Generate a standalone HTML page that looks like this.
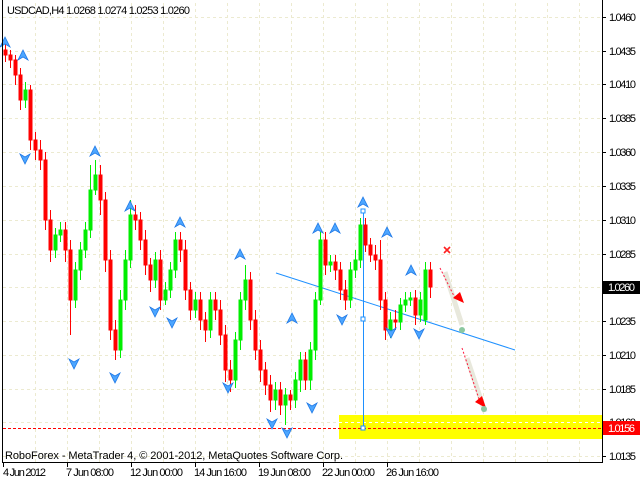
<!DOCTYPE html>
<html><head><meta charset="utf-8"><style>
html,body{margin:0;padding:0;background:#fff;width:640px;height:480px;overflow:hidden}
svg{display:block}
text{font-family:"Liberation Sans",sans-serif;font-size:11px;fill:#000}
</style></head><body>
<svg width="640" height="480" viewBox="0 0 640 480" xmlns="http://www.w3.org/2000/svg">
<rect width="640" height="480" fill="#fff"/>
<g stroke="#ecead0" stroke-width="1" stroke-dasharray="3,3">
<path d="M3 17.5H602M3 51.5H602M3 84.5H602M3 118.5H602M3 152.5H602M3 186.5H602M3 220.5H602M3 254.5H602M3 287.5H602M3 321.5H602M3 355.5H602M3 389.5H602M3 422.5H602M3 456.5H602"/>
<path d="M35.5 3V462M67.5 3V462M99.5 3V462M131.5 3V462M163.5 3V462M195.5 3V462M227.5 3V462M259.5 3V462M291.5 3V462M323.5 3V462M355.5 3V462M387.5 3V462M419.5 3V462M451.5 3V462M483.5 3V462M515.5 3V462M547.5 3V462M579.5 3V462"/>
</g>
<rect x="339" y="415" width="263" height="24" fill="#ffff00"/>
<path d="M339 422.5H602" stroke="#fff" stroke-dasharray="3,3"/>
<path d="M3 428.5H602" stroke="#ff0000" stroke-dasharray="3,2"/>
<path d="M276 273L515 350" stroke="#1e90ff" stroke-width="1"/>
<path d="M363.5 211V428" stroke="#1e90ff"/>
<g fill="#fff" stroke="#1e90ff"><rect x="361" y="209" width="4" height="4"/><rect x="361" y="317" width="4" height="4"/><rect x="361" y="426" width="4" height="4"/></g>
<g stroke="#ff0000" fill="#ff0000">
<path d="M5.5 42V62M10.5 50V68M15.5 55V85M20.5 68V110M30.5 85V150M35.5 132V160M40.5 140V170M45.5 152V230M50.5 210V262M65.5 222V262M70.5 240V335M100.5 165V215M105.5 192V272M110.5 250V340M115.5 320V360M135.5 205V230M140.5 212V250M145.5 230V275M150.5 258V292M160.5 250V310M180.5 232V262M185.5 240V300M190.5 282V320M200.5 292V330M205.5 312V342M215.5 292V320M220.5 300V345M225.5 325V382M230.5 360V392M250.5 272V330M255.5 310V360M260.5 340V382M265.5 362V395M270.5 375V412M280.5 382V415M290.5 390V410M305.5 352V390M325.5 232V275M335.5 255V280M340.5 262V300M345.5 280V310M365.5 218V252M370.5 238V262M375.5 245V270M380.5 240V310M385.5 292V340M395.5 310V330M415.5 290V325M430.5 262V298"/>
<rect x="4" y="50" width="3" height="5"/><rect x="9" y="55" width="3" height="5"/><rect x="14" y="60" width="3" height="15"/><rect x="19" y="75" width="3" height="25"/><rect x="29" y="90" width="3" height="50"/><rect x="34" y="140" width="3" height="10"/><rect x="39" y="150" width="3" height="10"/><rect x="44" y="160" width="3" height="60"/><rect x="49" y="220" width="3" height="30"/><rect x="64" y="230" width="3" height="20"/><rect x="69" y="250" width="3" height="50"/><rect x="99" y="175" width="3" height="25"/><rect x="104" y="200" width="3" height="60"/><rect x="109" y="260" width="3" height="70"/><rect x="114" y="330" width="3" height="20"/><rect x="134" y="215" width="3" height="5"/><rect x="139" y="220" width="3" height="20"/><rect x="144" y="240" width="3" height="25"/><rect x="149" y="265" width="3" height="15"/><rect x="159" y="260" width="3" height="40"/><rect x="179" y="240" width="3" height="10"/><rect x="184" y="250" width="3" height="40"/><rect x="189" y="290" width="3" height="20"/><rect x="199" y="300" width="3" height="20"/><rect x="204" y="320" width="3" height="10"/><rect x="214" y="300" width="3" height="10"/><rect x="219" y="310" width="3" height="25"/><rect x="224" y="335" width="3" height="35"/><rect x="229" y="370" width="3" height="10"/><rect x="249" y="280" width="3" height="40"/><rect x="254" y="320" width="3" height="30"/><rect x="259" y="350" width="3" height="20"/><rect x="264" y="370" width="3" height="15"/><rect x="269" y="385" width="3" height="15"/><rect x="279" y="390" width="3" height="15"/><rect x="289" y="395" width="3" height="5"/><rect x="304" y="360" width="3" height="20"/><rect x="324" y="240" width="3" height="25"/><rect x="334" y="262" width="3" height="8"/><rect x="339" y="270" width="3" height="20"/><rect x="344" y="290" width="3" height="10"/><rect x="364" y="225" width="3" height="20"/><rect x="369" y="245" width="3" height="10"/><rect x="374" y="255" width="3" height="5"/><rect x="379" y="260" width="3" height="40"/><rect x="384" y="300" width="3" height="30"/><rect x="394" y="320" width="3" height="2"/><rect x="414" y="298" width="3" height="17"/><rect x="429" y="270" width="3" height="17"/>
</g>
<g stroke="#00ee00" fill="#00ee00">
<path d="M25.5 82V108M55.5 228V258M60.5 222V242M75.5 262V308M80.5 242V280M85.5 222V258M90.5 165V238M95.5 160V195M120.5 290V358M125.5 250V310M130.5 200V268M155.5 252V288M165.5 282V305M170.5 262V298M175.5 232V278M195.5 292V318M210.5 292V338M235.5 332V388M240.5 292V350M245.5 265V310M275.5 382V410M285.5 388V425M295.5 372V408M300.5 352V392M310.5 342V390M315.5 292V360M320.5 232V305M330.5 255V272M350.5 262V308M355.5 250V278M360.5 218V268M390.5 312V338M400.5 298V330M405.5 292V312M410.5 292V306M420.5 292V322M425.5 262V325"/>
<rect x="24" y="90" width="3" height="10"/><rect x="54" y="235" width="3" height="15"/><rect x="59" y="230" width="3" height="5"/><rect x="74" y="270" width="3" height="30"/><rect x="79" y="250" width="3" height="20"/><rect x="84" y="230" width="3" height="20"/><rect x="89" y="190" width="3" height="40"/><rect x="94" y="175" width="3" height="15"/><rect x="119" y="300" width="3" height="50"/><rect x="124" y="260" width="3" height="40"/><rect x="129" y="215" width="3" height="45"/><rect x="154" y="260" width="3" height="20"/><rect x="164" y="290" width="3" height="10"/><rect x="169" y="270" width="3" height="20"/><rect x="174" y="240" width="3" height="30"/><rect x="194" y="300" width="3" height="10"/><rect x="209" y="300" width="3" height="30"/><rect x="234" y="340" width="3" height="40"/><rect x="239" y="300" width="3" height="40"/><rect x="244" y="280" width="3" height="20"/><rect x="274" y="390" width="3" height="10"/><rect x="284" y="395" width="3" height="10"/><rect x="294" y="380" width="3" height="20"/><rect x="299" y="360" width="3" height="20"/><rect x="309" y="350" width="3" height="30"/><rect x="314" y="300" width="3" height="50"/><rect x="319" y="240" width="3" height="60"/><rect x="329" y="262" width="3" height="3"/><rect x="349" y="270" width="3" height="30"/><rect x="354" y="260" width="3" height="10"/><rect x="359" y="225" width="3" height="35"/><rect x="389" y="320" width="3" height="10"/><rect x="399" y="305" width="3" height="17"/><rect x="404" y="300" width="3" height="5"/><rect x="409" y="298" width="3" height="2"/><rect x="419" y="300" width="3" height="15"/><rect x="424" y="270" width="3" height="50"/>
</g>
<g fill="#4da6ff" stroke="#1e78e6" stroke-width="0.8">
<path d="M0 -5L-5 5L0 2L5 5Z" transform="translate(5,42)"/>
<path d="M0 -5L-5 5L0 2L5 5Z" transform="translate(23,55)"/>
<path d="M0 -5L-5 5L0 2L5 5Z" transform="translate(95,151)"/>
<path d="M0 -5L-5 5L0 2L5 5Z" transform="translate(130,206)"/>
<path d="M0 -5L-5 5L0 2L5 5Z" transform="translate(180,222)"/>
<path d="M0 -5L-5 5L0 2L5 5Z" transform="translate(240,254)"/>
<path d="M0 -5L-5 5L0 2L5 5Z" transform="translate(292,318)"/>
<path d="M0 -5L-5 5L0 2L5 5Z" transform="translate(318,228)"/>
<path d="M0 -5L-5 5L0 2L5 5Z" transform="translate(335,228)"/>
<path d="M0 -5L-5 5L0 2L5 5Z" transform="translate(363,202)"/>
<path d="M0 -5L-5 5L0 2L5 5Z" transform="translate(387,232)"/>
<path d="M0 -5L-5 5L0 2L5 5Z" transform="translate(411,270)"/>
<path d="M0 5L-5 -5L0 -2L5 -5Z" transform="translate(25,159)"/>
<path d="M0 5L-5 -5L0 -2L5 -5Z" transform="translate(74,364)"/>
<path d="M0 5L-5 -5L0 -2L5 -5Z" transform="translate(115,378)"/>
<path d="M0 5L-5 -5L0 -2L5 -5Z" transform="translate(155,312)"/>
<path d="M0 5L-5 -5L0 -2L5 -5Z" transform="translate(172,323)"/>
<path d="M0 5L-5 -5L0 -2L5 -5Z" transform="translate(228,388)"/>
<path d="M0 5L-5 -5L0 -2L5 -5Z" transform="translate(272,424)"/>
<path d="M0 5L-5 -5L0 -2L5 -5Z" transform="translate(287,433)"/>
<path d="M0 5L-5 -5L0 -2L5 -5Z" transform="translate(312,408)"/>
<path d="M0 5L-5 -5L0 -2L5 -5Z" transform="translate(342,320)"/>
<path d="M0 5L-5 -5L0 -2L5 -5Z" transform="translate(391,333)"/>
<path d="M0 5L-5 -5L0 -2L5 -5Z" transform="translate(419,334)"/>
</g>
<path d="M445 272L462 325M467 358L485 412" stroke="#e8e8dc" stroke-width="5"/>
<path d="M440 268L456 300M462 348L480 402" stroke="#ff1a40" stroke-dasharray="2,2"/>
<path d="M453 298L464 303L460 292Z M475 402L486 408L482 396Z" fill="#ff0000"/>
<circle cx="462" cy="330" r="3" fill="#8cc8a0"/><circle cx="484" cy="409" r="3" fill="#8cc8a0"/>
<path d="M444 247L450 253M450 247L444 253" stroke="#ff2020" stroke-width="1.6"/>
<path d="M2.5 0V462.5H602.5V0" fill="none" stroke="#000"/>
<g stroke="#000"><path d="M602 17.5h4M602 51.5h4M602 84.5h4M602 118.5h4M602 152.5h4M602 186.5h4M602 220.5h4M602 254.5h4M602 287.5h4M602 321.5h4M602 355.5h4M602 389.5h4M602 422.5h4M602 456.5h4"/>
<path d="M3.5 462v5M67.5 462v5M131.5 462v5M195.5 462v5M259.5 462v5M323.5 462v5M387.5 462v5"/></g>
<g>
<text x="609" y="21" textLength="27">1.0460</text><text x="609" y="55" textLength="27">1.0435</text><text x="609" y="88" textLength="27">1.0410</text><text x="609" y="122" textLength="27">1.0385</text><text x="609" y="156" textLength="27">1.0360</text><text x="609" y="190" textLength="27">1.0335</text><text x="609" y="224" textLength="27">1.0310</text><text x="609" y="258" textLength="27">1.0285</text><text x="609" y="325" textLength="27">1.0235</text><text x="609" y="359" textLength="27">1.0210</text><text x="609" y="393" textLength="27">1.0185</text><text x="609" y="426" textLength="27">1.0160</text><text x="609" y="460" textLength="27">1.0135</text>
</g>
<rect x="603" y="281" width="37" height="13" fill="#000"/><text x="608" y="291" textLength="27" style="fill:#fff">1.0260</text>
<rect x="603" y="421" width="37" height="14" fill="#ff0000"/><text x="608" y="432" textLength="27" style="fill:#fff">1.0156</text>
<text x="7" y="14" textLength="183">USDCAD,H4  1.0268 1.0274 1.0253 1.0260</text>
<text x="5" y="459" textLength="338">RoboForex - MetaTrader 4, © 2001-2012, MetaQuotes Software Corp.</text>
<g><text x="3" y="476" textLength="43">4 Jun 2012</text><text x="66" y="476" textLength="48">7 Jun 08:00</text><text x="130" y="476" textLength="53">12 Jun 00:00</text><text x="194" y="476" textLength="53">14 Jun 16:00</text><text x="258" y="476" textLength="53">19 Jun 08:00</text><text x="322" y="476" textLength="53">22 Jun 00:00</text><text x="386" y="476" textLength="53">26 Jun 16:00</text></g>
</svg>
</body></html>
